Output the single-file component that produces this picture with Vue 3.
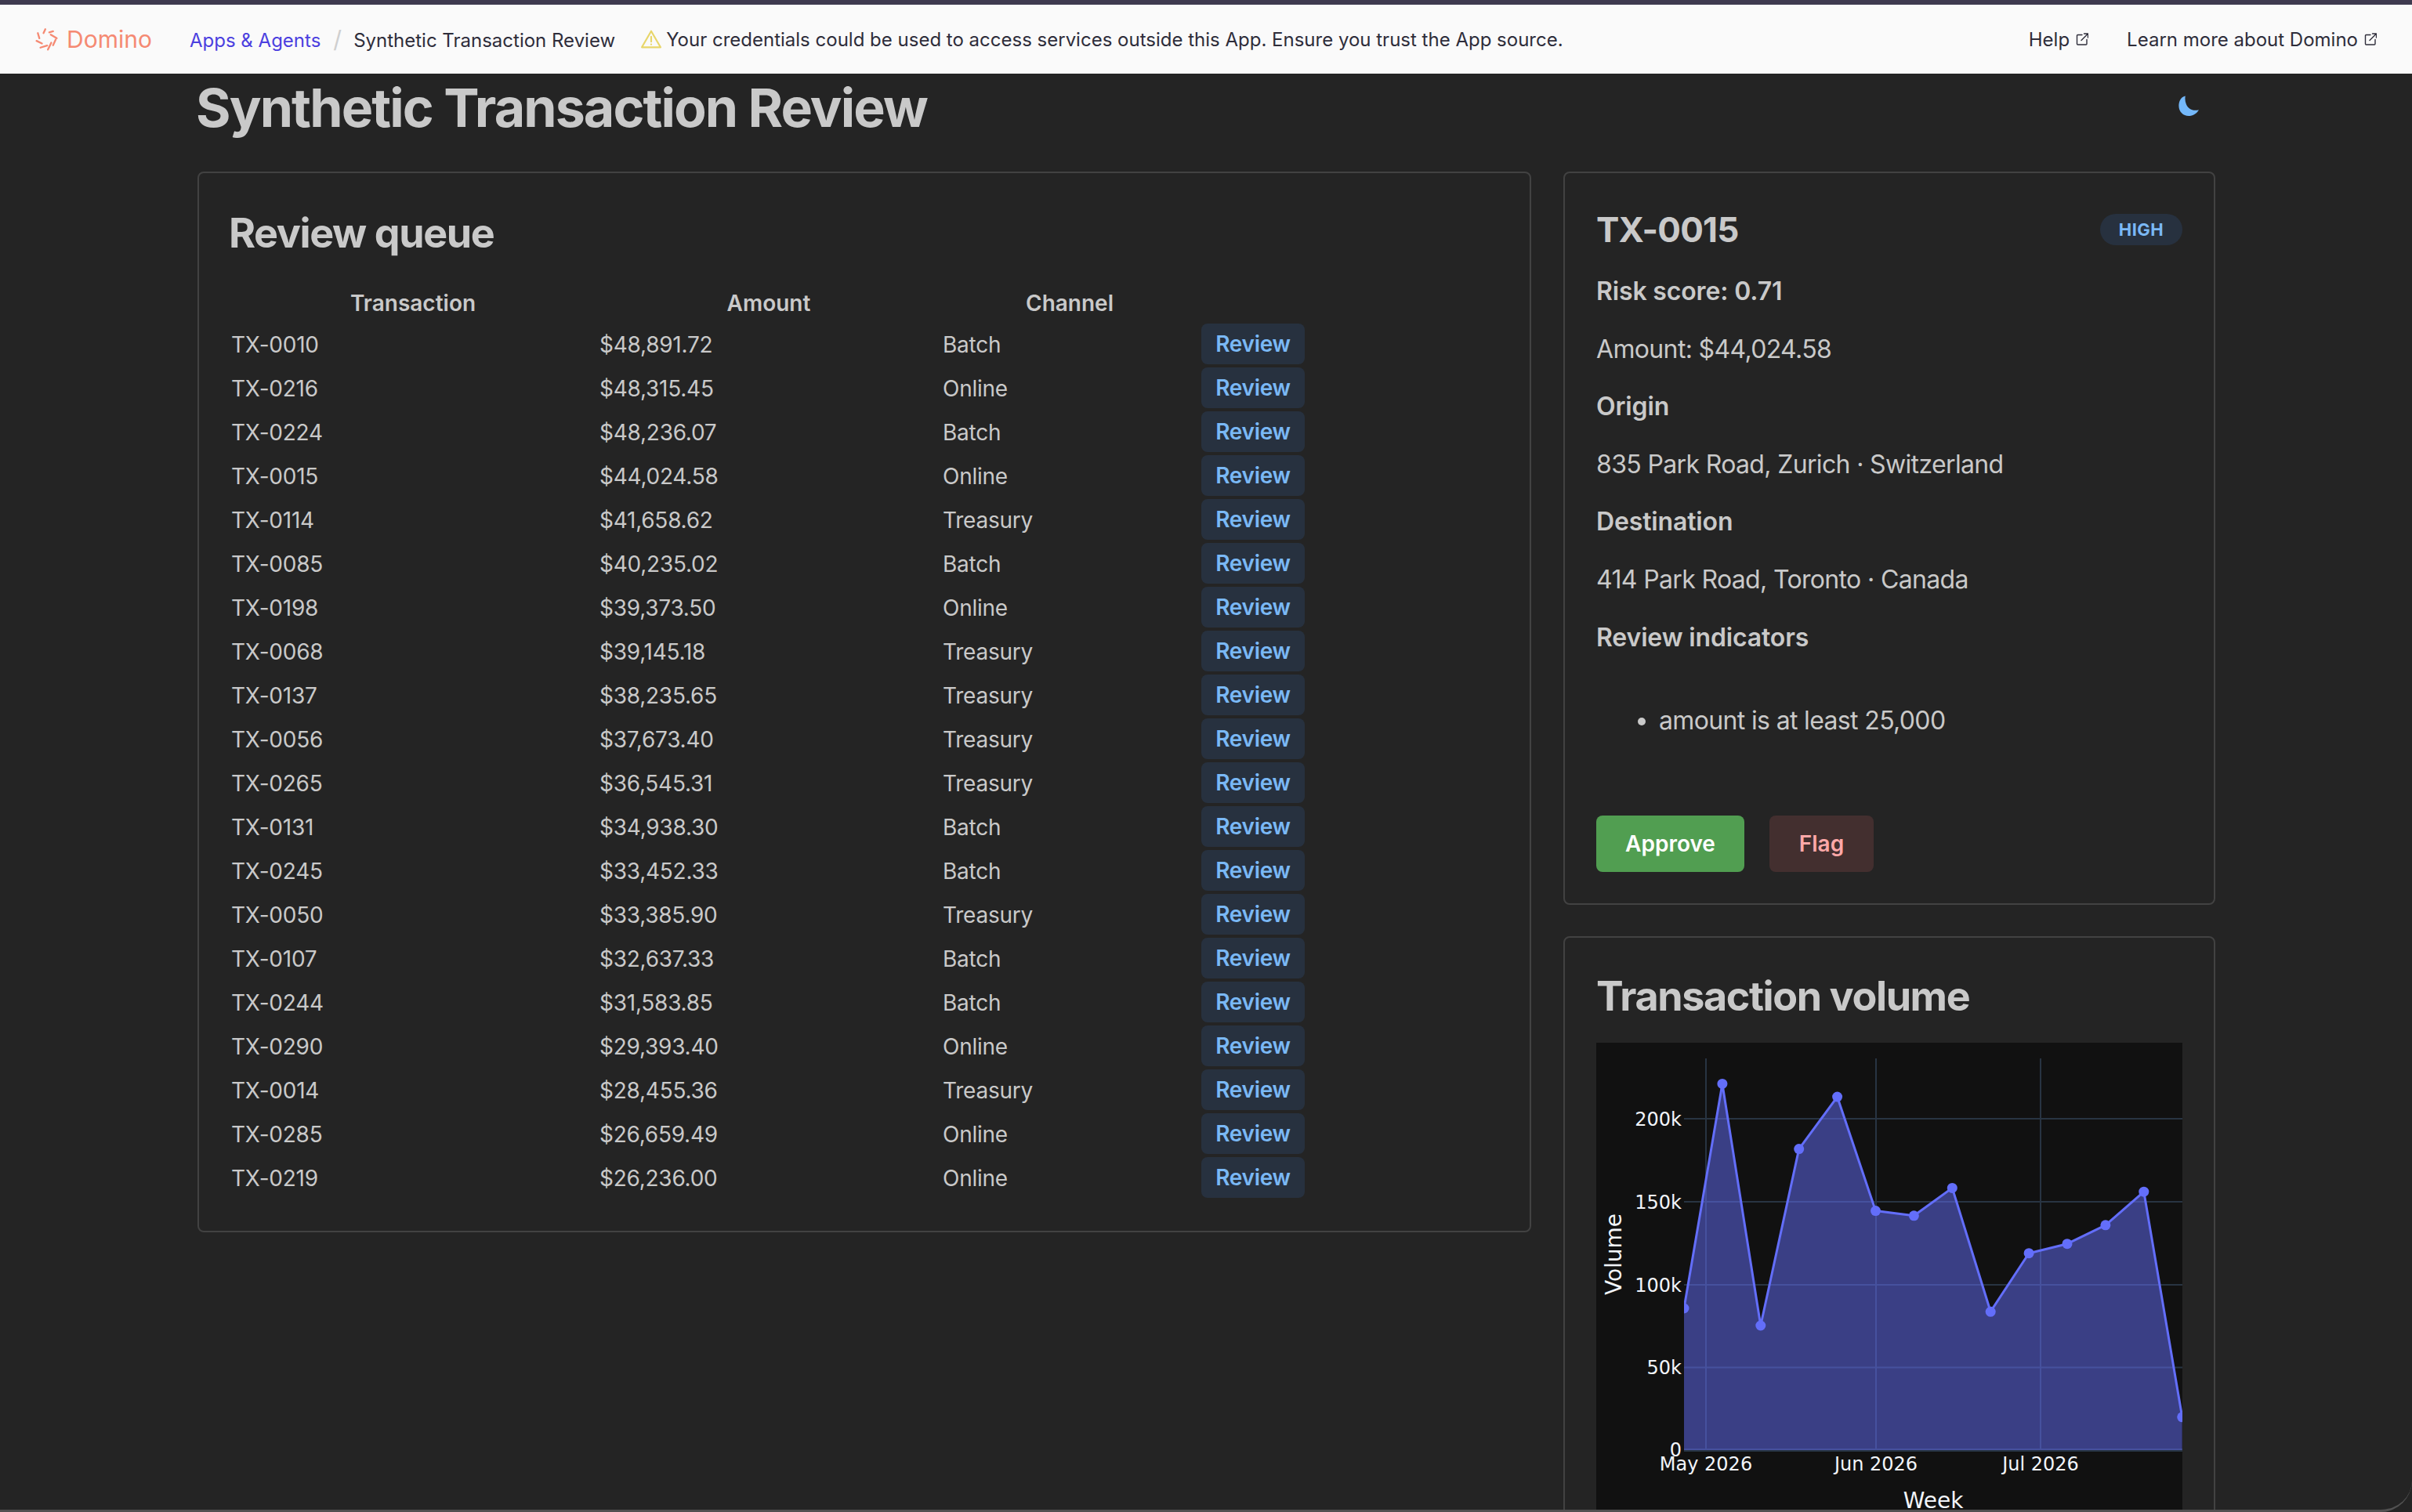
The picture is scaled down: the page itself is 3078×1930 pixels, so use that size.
<template>
  <div class="page">
    <header class="topbar">
      <div class="brand">
        <svg class="logo" viewBox="40 100 100 100" fill="none" stroke="#f58a73" stroke-width="7" stroke-linecap="round">
          <path v-for="p in petals" :key="p" :d="p" />
        </svg>
        <span class="brand-name">Domino</span>
      </div>
      <a class="crumb-link">Apps &amp; Agents</a>
      <span class="crumb-sep">/</span>
      <span class="crumb-current">Synthetic Transaction Review</span>
      <svg class="warn" viewBox="0 0 24 22" fill="none" stroke="#e8d66a" stroke-width="2" stroke-linejoin="round" stroke-linecap="round">
        <path d="M12 1.5 L23 20.5 H1 Z" />
        <path d="M12 8 V14 M12 17 V17.2" />
      </svg>
      <span class="warn-text">Your credentials could be used to access services outside this App. Ensure you trust the App source.</span>
      <div class="top-links">
        <span class="top-link">Help
          <svg class="ext" viewBox="0 0 16 16" fill="none" stroke="#2e2d3a" stroke-width="1.4" stroke-linecap="round" stroke-linejoin="round">
            <path d="M8 2.5 H2.5 A1 1 0 0 0 1.5 3.5 V14 A1 1 0 0 0 2.5 15 H13 A1 1 0 0 0 14 14 V8.5" />
            <path d="M7 9.5 L15 1.5 M10.5 1 H15.5 V6" />
          </svg>
        </span>
        <span class="top-link">Learn more about Domino
          <svg class="ext" viewBox="0 0 16 16" fill="none" stroke="#2e2d3a" stroke-width="1.4" stroke-linecap="round" stroke-linejoin="round">
            <path d="M8 2.5 H2.5 A1 1 0 0 0 1.5 3.5 V14 A1 1 0 0 0 2.5 15 H13 A1 1 0 0 0 14 14 V8.5" />
            <path d="M7 9.5 L15 1.5 M10.5 1 H15.5 V6" />
          </svg>
        </span>
      </div>
    </header>

    <main class="container">
      <div class="title-row">
        <h1>Synthetic Transaction Review</h1>
        <svg class="moon" viewBox="60 36 80 80" fill="#74b8fa">
          <path d="M88 40 C70 44 64 62 64 76 C64 98 80 113 100 113 C116 113 130 104 137 91 C115 96 98 88 91 70 C87 60 86 50 88 40 Z" />
        </svg>
      </div>

      <div class="columns">
        <section class="card queue">
          <h2>Review queue</h2>
          <table>
            <thead>
              <tr>
                <th>Transaction</th>
                <th>Amount</th>
                <th>Channel</th>
                <th></th>
              </tr>
            </thead>
            <tbody>
              <tr v-for="r in rows" :key="r[0]">
                <td>{{ r[0] }}</td>
                <td>{{ r[1] }}</td>
                <td>{{ r[2] }}</td>
                <td><button class="review">Review</button></td>
              </tr>
            </tbody>
          </table>
        </section>

        <div class="side">
          <section class="card detail">
            <div class="detail-head">
              <h3>TX-0015</h3>
              <span class="badge">HIGH</span>
            </div>
            <p class="strong">Risk score: 0.71</p>
            <p>Amount: $44,024.58</p>
            <p class="strong">Origin</p>
            <p>835 Park Road, Zurich · Switzerland</p>
            <p class="strong">Destination</p>
            <p>414 Park Road, Toronto · Canada</p>
            <p class="strong">Review indicators</p>
            <ul>
              <li>amount is at least 25,000</li>
            </ul>
            <div class="actions">
              <button class="approve">Approve</button>
              <button class="flag">Flag</button>
            </div>
          </section>

          <section class="card volume">
            <h2>Transaction volume</h2>
            <div class="chart">
              <svg class="plot" viewBox="0 0 748 640">
                <defs>
                  <clipPath id="plot-clip"><rect x="112" y="20" width="636" height="504" /></clipPath>
                </defs>
                <g stroke="#283442" stroke-width="2">
                  <line v-for="y in gridY" :key="y" x1="112" x2="748" :y1="y" :y2="y" />
                  <line v-for="x in gridX" :key="x" :x1="x" :x2="x" y1="20" y2="520" />
                </g>
                <line x1="112" x2="748" y1="520" y2="520" stroke="#283442" stroke-width="4" />
                <g clip-path="url(#plot-clip)">
                  <path :d="areaPath" fill="rgba(99,110,250,0.5)" />
                  <path :d="linePath" fill="none" stroke="#636efa" stroke-width="3" stroke-linejoin="round" />
                  <circle v-for="p in points" :key="p[0]" :cx="p[0]" :cy="p[1]" r="6.5" fill="#636efa" />
                </g>
                <g class="tick" text-anchor="end">
                  <text x="109" y="106">200k</text>
                  <text x="109" y="212">150k</text>
                  <text x="109" y="318">100k</text>
                  <text x="109" y="423">50k</text>
                  <text x="109" y="528">0</text>
                </g>
                <g class="tick" text-anchor="middle">
                  <text x="140" y="546">May 2026</text>
                  <text x="357" y="546">Jun 2026</text>
                  <text x="567" y="546">Jul 2026</text>
                </g>
                <text class="axis" x="430" y="594" text-anchor="middle">Week</text>
                <text class="axis" transform="translate(32 270) rotate(-90)" text-anchor="middle">Volume</text>
              </svg>
            </div>
          </section>
        </div>
      </div>
    </main>
  </div>
</template>

<script setup>
const petals = [
  'M85 110 L78 125',
  'M100 122 L115 118',
  'M106 131 L129 145',
  'M125 150 L115 172',
  'M108 162 L95 189',
  'M92 173 L66 181',
  'M72 165 L51 155',
  'M62 145 L56 125',
]

const rows = [
  ['TX-0010', '$48,891.72', 'Batch'],
  ['TX-0216', '$48,315.45', 'Online'],
  ['TX-0224', '$48,236.07', 'Batch'],
  ['TX-0015', '$44,024.58', 'Online'],
  ['TX-0114', '$41,658.62', 'Treasury'],
  ['TX-0085', '$40,235.02', 'Batch'],
  ['TX-0198', '$39,373.50', 'Online'],
  ['TX-0068', '$39,145.18', 'Treasury'],
  ['TX-0137', '$38,235.65', 'Treasury'],
  ['TX-0056', '$37,673.40', 'Treasury'],
  ['TX-0265', '$36,545.31', 'Treasury'],
  ['TX-0131', '$34,938.30', 'Batch'],
  ['TX-0245', '$33,452.33', 'Batch'],
  ['TX-0050', '$33,385.90', 'Treasury'],
  ['TX-0107', '$32,637.33', 'Batch'],
  ['TX-0244', '$31,583.85', 'Batch'],
  ['TX-0290', '$29,393.40', 'Online'],
  ['TX-0014', '$28,455.36', 'Treasury'],
  ['TX-0285', '$26,659.49', 'Online'],
  ['TX-0219', '$26,236.00', 'Online'],
]

const gridY = [97, 203, 309, 414.5]
const gridX = [140, 357, 567]
const ys = [339, 52.4, 361, 135.6, 69.1, 214.6, 220.8, 185.4, 343.3, 268.7, 256.7, 232.8, 190.2, 477.8]
const points = ys.map((y, i) => [112 + 48.9 * i, y])
const linePath = 'M' + points.map((p) => p.join(' ')).join(' L')
const areaPath = linePath + ' L' + points[13][0] + ' 520 L112 520 Z'
</script>

<style>
html, body {
  margin: 0;
  background: #242424;
}
</style>

<style scoped>
.page {
  box-sizing: border-box;
  width: 3078px;
  height: 1930px;
  overflow: hidden;
  background: #242424;
  color: #c9c9c9;
  font-family: Inter, "Liberation Sans", sans-serif;
  border-bottom: 3px solid #515151;
  border-bottom-right-radius: 40px;
}
.topbar {
  box-sizing: border-box;
  height: 94px;
  display: flex;
  align-items: center;
  background: #fafafa;
  border-top: 6px solid #3e3a4f;
  padding: 0 45px 0 43px;
  color: #2e2d3a;
  font-size: 24px;
}
.brand {
  display: flex;
  align-items: center;
  width: 199px;
}
.logo {
  width: 33px;
  height: 33px;
  margin-right: 9px;
}
.brand-name {
  color: #f58a73;
  font-size: 30px;
}
.crumb-link {
  color: #4b3fdf;
  margin-top: 3px;
}
.crumb-sep {
  color: #cfcfcf;
  margin: 0 15px 0 16px;
  font-size: 30px;
}
.crumb-current {
  margin-top: 3px;
}
.warn {
  width: 26px;
  height: 24px;
  margin-left: 33px;
  margin-right: 6px;
}
.top-links {
  margin-left: auto;
  display: flex;
  gap: 49px;
}
.top-link {
  display: flex;
  align-items: center;
  gap: 8px;
}
.ext {
  width: 16px;
  height: 16px;
}
.container {
  width: 2575px;
  margin: 0 0 0 252px;
}
.title-row {
  display: flex;
  align-items: center;
  justify-content: space-between;
  height: 88px;
  margin-top: -1px;
  margin-bottom: 38px;
}
h1 {
  margin: 0 0 0 -2px;
  font-size: 68px;
  font-weight: 700;
  line-height: 88px;
  letter-spacing: -1.9px;
}
.moon {
  width: 28px;
  height: 28px;
  margin-right: 20px;
  margin-top: -4px;
}
.columns {
  display: flex;
  align-items: flex-start;
  gap: 41px;
}
.card {
  box-sizing: border-box;
  border: 2px solid #424242;
  border-radius: 8px;
  padding: 40px;
}
.queue {
  width: 1703px;
  padding-left: 38px;
}
h2 {
  margin: 0;
  font-size: 52px;
  font-weight: 700;
  line-height: 70px;
  letter-spacing: -1.4px;
}
.queue h2 {
  line-height: 74px;
  margin-bottom: 31px;
}
table {
  border-collapse: collapse;
  table-layout: fixed;
  width: 1376px;
  font-size: 28px;
}
th {
  font-weight: 600;
  height: 45px;
  padding: 0;
  line-height: 43px;
  vertical-align: top;
  text-align: center;
}
th:nth-child(1) { width: 470px; }
th:nth-child(2) { width: 438px; }
th:nth-child(3) { width: 330px; }
th:nth-child(4) { width: 138px; }
td {
  height: 56px;
  padding: 0 3px;
  line-height: 1;
  letter-spacing: -0.25px;
}
td:not(:last-child) {
  height: 55px;
  padding-top: 1px;
}
button {
  font-family: inherit;
  border: 0;
  border-radius: 8px;
}
.review {
  display: block;
  width: 132px;
  height: 52px;
  padding: 0;
  background: #27313f;
  color: #7ab8f5;
  font-size: 28px;
  font-weight: 600;
  letter-spacing: -0.3px;
}
.side {
  width: 832px;
  display: flex;
  flex-direction: column;
  gap: 40px;
}
.detail-head {
  display: flex;
  align-items: center;
  justify-content: space-between;
  height: 63px;
  margin-bottom: 23px;
}
h3 {
  margin: 0;
  font-size: 44px;
  font-weight: 700;
  letter-spacing: -0.8px;
}
.badge {
  box-sizing: border-box;
  height: 40px;
  width: 105px;
  border-radius: 20px;
  background: #27313f;
  color: #7ab8f5;
  font-size: 22px;
  font-weight: 700;
  letter-spacing: 0.5px;
  line-height: 40px;
  text-align: center;
}
p {
  margin: 0 0 24px;
  font-size: 32px;
  line-height: 49.6px;
  letter-spacing: -0.65px;
}
.strong {
  font-weight: 600;
  letter-spacing: -0.15px;
}
ul {
  margin: 57px 0 96px;
  padding-left: 80px;
  font-size: 32px;
  line-height: 49.6px;
  letter-spacing: -0.65px;
}
.actions {
  display: flex;
  gap: 32px;
}
.approve {
  width: 189px;
  height: 72px;
  background: #519e51;
  color: #ffffff;
  font-size: 28px;
  font-weight: 600;
}
.flag {
  width: 133px;
  height: 72px;
  background: #432f2f;
  color: #ffa8a8;
  font-size: 28px;
  font-weight: 600;
}
.volume h2 {
  margin-bottom: 24px;
}
.chart {
  height: 900px;
  background: #111111;
}
.plot {
  display: block;
  width: 748px;
  height: 640px;
}
.tick text {
  font-family: "DejaVu Sans", sans-serif;
  font-size: 24px;
  fill: #f2f5fa;
}
.axis {
  font-family: "DejaVu Sans", sans-serif;
  font-size: 28px;
  fill: #f2f5fa;
}
</style>
